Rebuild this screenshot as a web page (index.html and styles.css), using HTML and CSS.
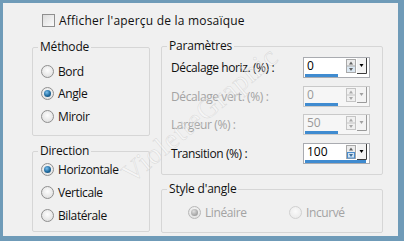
FILE: index.html
```html
<!DOCTYPE html>
<html lang="fr">
<head>
  <meta charset="UTF-8" />
  <title>Mosaïque</title>
  <link rel="stylesheet" href="styles.css">
</head>
<body>

  <div class="frame">
    <label class="check-row">
      <span class="checkbox"></span>
      <span>Afficher l'aperçu de la mosaïque</span>
    </label>

    <div class="cols">
      <!-- left column -->
      <div class="col-left">
        <fieldset class="group methode">
          <legend>Méthode</legend>
          <div class="radio-list">
            <div class="radio-row"><span class="radio"></span>Bord</div>
            <div class="radio-row"><span class="radio on"></span>Angle</div>
            <div class="radio-row"><span class="radio"></span>Miroir</div>
          </div>
        </fieldset>

        <fieldset class="group direction">
          <legend>Direction</legend>
          <div class="radio-list">
            <div class="radio-row"><span class="radio on"></span>Horizontale</div>
            <div class="radio-row"><span class="radio"></span>Verticale</div>
            <div class="radio-row"><span class="radio"></span>Bilatérale</div>
          </div>
        </fieldset>
      </div>

      <!-- right column -->
      <div class="col-right">
        <fieldset class="group params">
          <legend>Paramètres</legend>
          <div class="param-list">
            <div class="param-row">
              <span class="param-label">Décalage horiz. (%) :</span>
              <div class="spin">
                <div class="spin-top">
                  <span class="spin-value">0</span>
                  <svg class="spin-btns" width="24" height="16" viewBox="0 0 24 16">
                    <rect x="1.5" y="1.5" width="9" height="13" fill="#ececec" stroke="#a9a9a9" />
                    <rect x="2" y="8" width="8" height="6" fill="#dbe8f3" />
                    <line x1="2" y1="8" x2="10" y2="8" stroke="#a9a9a9" />
                    <path d="M4 6.5 L6 3.5 L8 6.5Z" fill="#606060" />
                    <path d="M4 10 L8 10 L6 13Z" fill="#606060" />
                    <rect x="12" y="0" width="9" height="15" fill="#f3f3f3" />
                    <path d="M21.5 0 V15.5 H12" fill="none" stroke="#3c3c3c" />
                    <path d="M14.5 6 L18.5 6 L16.5 9Z" fill="#000" />
                  </svg>
                </div>
                <span class="bar"></span>
              </div>
            </div>
            <div class="param-row off">
              <span class="param-label">Décalage vert. (%) :</span>
              <div class="spin">
                <div class="spin-top">
                  <span class="spin-value">0</span>
                  <svg class="spin-btns" width="24" height="16" viewBox="0 0 24 16">
                    <rect x="1.5" y="1.5" width="9" height="13" fill="#f0f0f0" stroke="#c4c4c4" />
                    <line x1="2" y1="8" x2="10" y2="8" stroke="#c4c4c4" />
                    <path d="M4 6.5 L6 3.5 L8 6.5Z" fill="#a8a8a8" />
                    <path d="M4 10 L8 10 L6 13Z" fill="#a8a8a8" />
                    <rect x="12" y="0" width="9" height="15" fill="#f3f3f3" />
                    <path d="M21.5 0 V15.5 H12" fill="none" stroke="#9a9a9a" />
                    <path d="M14.5 6 L18.5 6 L16.5 9Z" fill="#a0a0a0" />
                  </svg>
                </div>
                <span class="bar"></span>
              </div>
            </div>
            <div class="param-row off">
              <span class="param-label">Largeur (%) :</span>
              <div class="spin">
                <div class="spin-top">
                  <span class="spin-value">50</span>
                  <svg class="spin-btns" width="24" height="16" viewBox="0 0 24 16">
                    <rect x="1.5" y="1.5" width="9" height="13" fill="#f0f0f0" stroke="#c4c4c4" />
                    <line x1="2" y1="8" x2="10" y2="8" stroke="#c4c4c4" />
                    <path d="M4 6.5 L6 3.5 L8 6.5Z" fill="#a8a8a8" />
                    <path d="M4 10 L8 10 L6 13Z" fill="#a8a8a8" />
                    <rect x="12" y="0" width="9" height="15" fill="#f3f3f3" />
                    <path d="M21.5 0 V15.5 H12" fill="none" stroke="#9a9a9a" />
                    <path d="M14.5 6 L18.5 6 L16.5 9Z" fill="#a0a0a0" />
                  </svg>
                </div>
                <span class="bar"></span>
              </div>
            </div>
            <div class="param-row">
              <span class="param-label">Transition (%) :</span>
              <div class="spin">
                <div class="spin-top">
                  <span class="spin-value">100</span>
                  <svg class="spin-btns" width="24" height="16" viewBox="0 0 24 16">
                    <rect x="1.5" y="1.5" width="9" height="13" fill="#ececec" stroke="#a9a9a9" />
                    <rect x="2" y="8" width="8" height="6" fill="#cfe2f3" />
                    <rect x="2.5" y="8.5" width="7" height="5.5" fill="none" stroke="#4a8ccc" />
                    <path d="M4 6.5 L6 3.5 L8 6.5Z" fill="#606060" />
                    <path d="M4 10 L8 10 L6 13Z" fill="#3f6f9a" />
                    <rect x="12" y="0" width="9" height="15" fill="#f3f3f3" />
                    <path d="M21.5 0 V15.5 H12" fill="none" stroke="#3c3c3c" />
                    <path d="M14.5 6 L18.5 6 L16.5 9Z" fill="#000" />
                  </svg>
                </div>
                <span class="bar full"></span>
              </div>
            </div>
          </div>
        </fieldset>

        <fieldset class="group style-angle">
          <legend>Style d'angle</legend>
          <div class="inline-radios">
            <div class="radio-row off"><span class="radio on dim"></span>Linéaire</div>
            <div class="radio-row off"><span class="radio dim faint"></span>Incurvé</div>
          </div>
        </fieldset>
      </div>
    </div>

    <span class="watermark">VioletteGraphic</span>
  </div>

</body>
</html>
```

FILE: styles.css
```css
body {
  margin: 0;
  font-family: 'Open Sans', 'Noto Sans', sans-serif;
  font-size: 12px;
  color: #111;
}

.frame {
  position: relative;
  box-sizing: border-box;
  width: 404px;
  height: 241px;
  background: #f0f0f0;
  border-style: solid;
  border-color: #6f9bb8;
  border-width: 3px 6px 5px 3px;
  padding: 8px 0 0 29px;
  overflow: hidden;
}

/* --- checkbox row --- */
.check-row {
  display: flex;
  align-items: center;
  gap: 4px;
  height: 19px;
  margin-left: 10px;
  letter-spacing: 0.2px;
}
.checkbox {
  box-sizing: border-box;
  width: 13px;
  height: 13px;
  border: 1px solid #8f8f8f;
  background: linear-gradient(135deg, #dcdcdc, #fbfbfb);
}

/* --- columns --- */
.cols {
  display: flex;
  gap: 11px;
  margin-top: 8px;
  align-items: flex-start;
}
.col-left {
  width: 118px;
  display: flex;
  flex-direction: column;
  gap: 7px;
  margin-top: 1px;
}
.col-right {
  width: 222px;
  display: flex;
  flex-direction: column;
  gap: 6px;
}

.group {
  box-sizing: border-box;
  margin: 0;
  padding: 0;
  min-width: 0;
  border: 1px solid #d6d6d6;
  border-radius: 2px;
}
.group legend {
  margin-left: 5px;
  padding: 0 2px;
  line-height: 16px;
  letter-spacing: -0.2px;
}

.methode { height: 97px; }
.direction { height: 89px; }
.params { height: 137px; }
.style-angle { height: 52px; }

/* --- radio buttons --- */
.radio-list {
  display: flex;
  flex-direction: column;
  margin-top: 5px;
}
.direction .radio-list {
  margin-top: -1px;
}
.direction .radio-row {
  height: 23px;
}
.radio-row {
  display: flex;
  align-items: center;
  gap: 4px;
  height: 22.5px;
  padding-left: 8px;
  letter-spacing: -0.4px;
}
.radio {
  position: relative;
  box-sizing: border-box;
  width: 13px;
  height: 13px;
  border-radius: 50%;
  border: 1px solid #8f8f8f;
  background: radial-gradient(circle at 50% 40%, #fdfdfd, #d9d9d9);
}
.radio.on::after {
  content: "";
  position: absolute;
  left: 2px;
  top: 2px;
  width: 7px;
  height: 7px;
  border-radius: 50%;
  background: radial-gradient(circle at 40% 35%, #7cc0ee, #1f6a9e 55%, #0d3d62);
}
.radio.dim {
  border-color: #b8b8b8;
}
.radio.dim.on::after {
  background: radial-gradient(circle at 40% 35%, #e0e0e0, #a9a9a9 60%, #8c8c8c);
}
.radio.faint {
  border-color: #d0d0d0;
  background: radial-gradient(circle at 50% 40%, #fafafa, #e6e6e6);
}
.off {
  color: #a3a3a3;
}

.inline-radios {
  display: flex;
  margin-top: 2px;
  padding-left: 18px;
}
.inline-radios .radio-row {
  width: 100px;
  height: 26px;
}

/* --- parameter rows --- */
.param-list {
  display: flex;
  flex-direction: column;
  gap: 7.7px;
  margin-top: 3px;
}
.param-row {
  display: flex;
  align-items: center;
  height: 21px;
  padding-left: 9px;
}
.param-label {
  width: 132px;
  letter-spacing: -0.4px;
}

.spin {
  box-sizing: border-box;
  width: 67px;
  height: 21px;
  border: 1px solid #a9abb0;
  background: #fff;
  display: flex;
  flex-direction: column;
}
.off .spin {
  border-color: #c9c9c9;
  background: #f6f6f6;
}
.spin-top {
  display: flex;
  align-items: center;
  height: 16px;
}
.spin-value {
  padding-left: 3px;
  line-height: 16px;
  color: #000;
}
.off .spin-value {
  color: #9a9a9a;
}
.spin-btns {
  margin-left: auto;
}
.bar {
  display: block;
  width: 33px;
  height: 3px;
  margin-left: 1px;
  background: #3f8bd0;
}
.bar.full {
  width: 61px;
}

/* --- watermark --- */
.watermark {
  position: absolute;
  left: 197px;
  top: 112px;
  transform: translate(-50%, -50%) rotate(-40deg);
  font-family: 'Liberation Serif', serif;
  font-size: 28px;
  letter-spacing: 1px;
  color: rgba(255, 255, 255, 0.4);
  -webkit-text-stroke: 0.5px rgba(180, 180, 180, 0.45);
  white-space: nowrap;
  pointer-events: none;
}
```
